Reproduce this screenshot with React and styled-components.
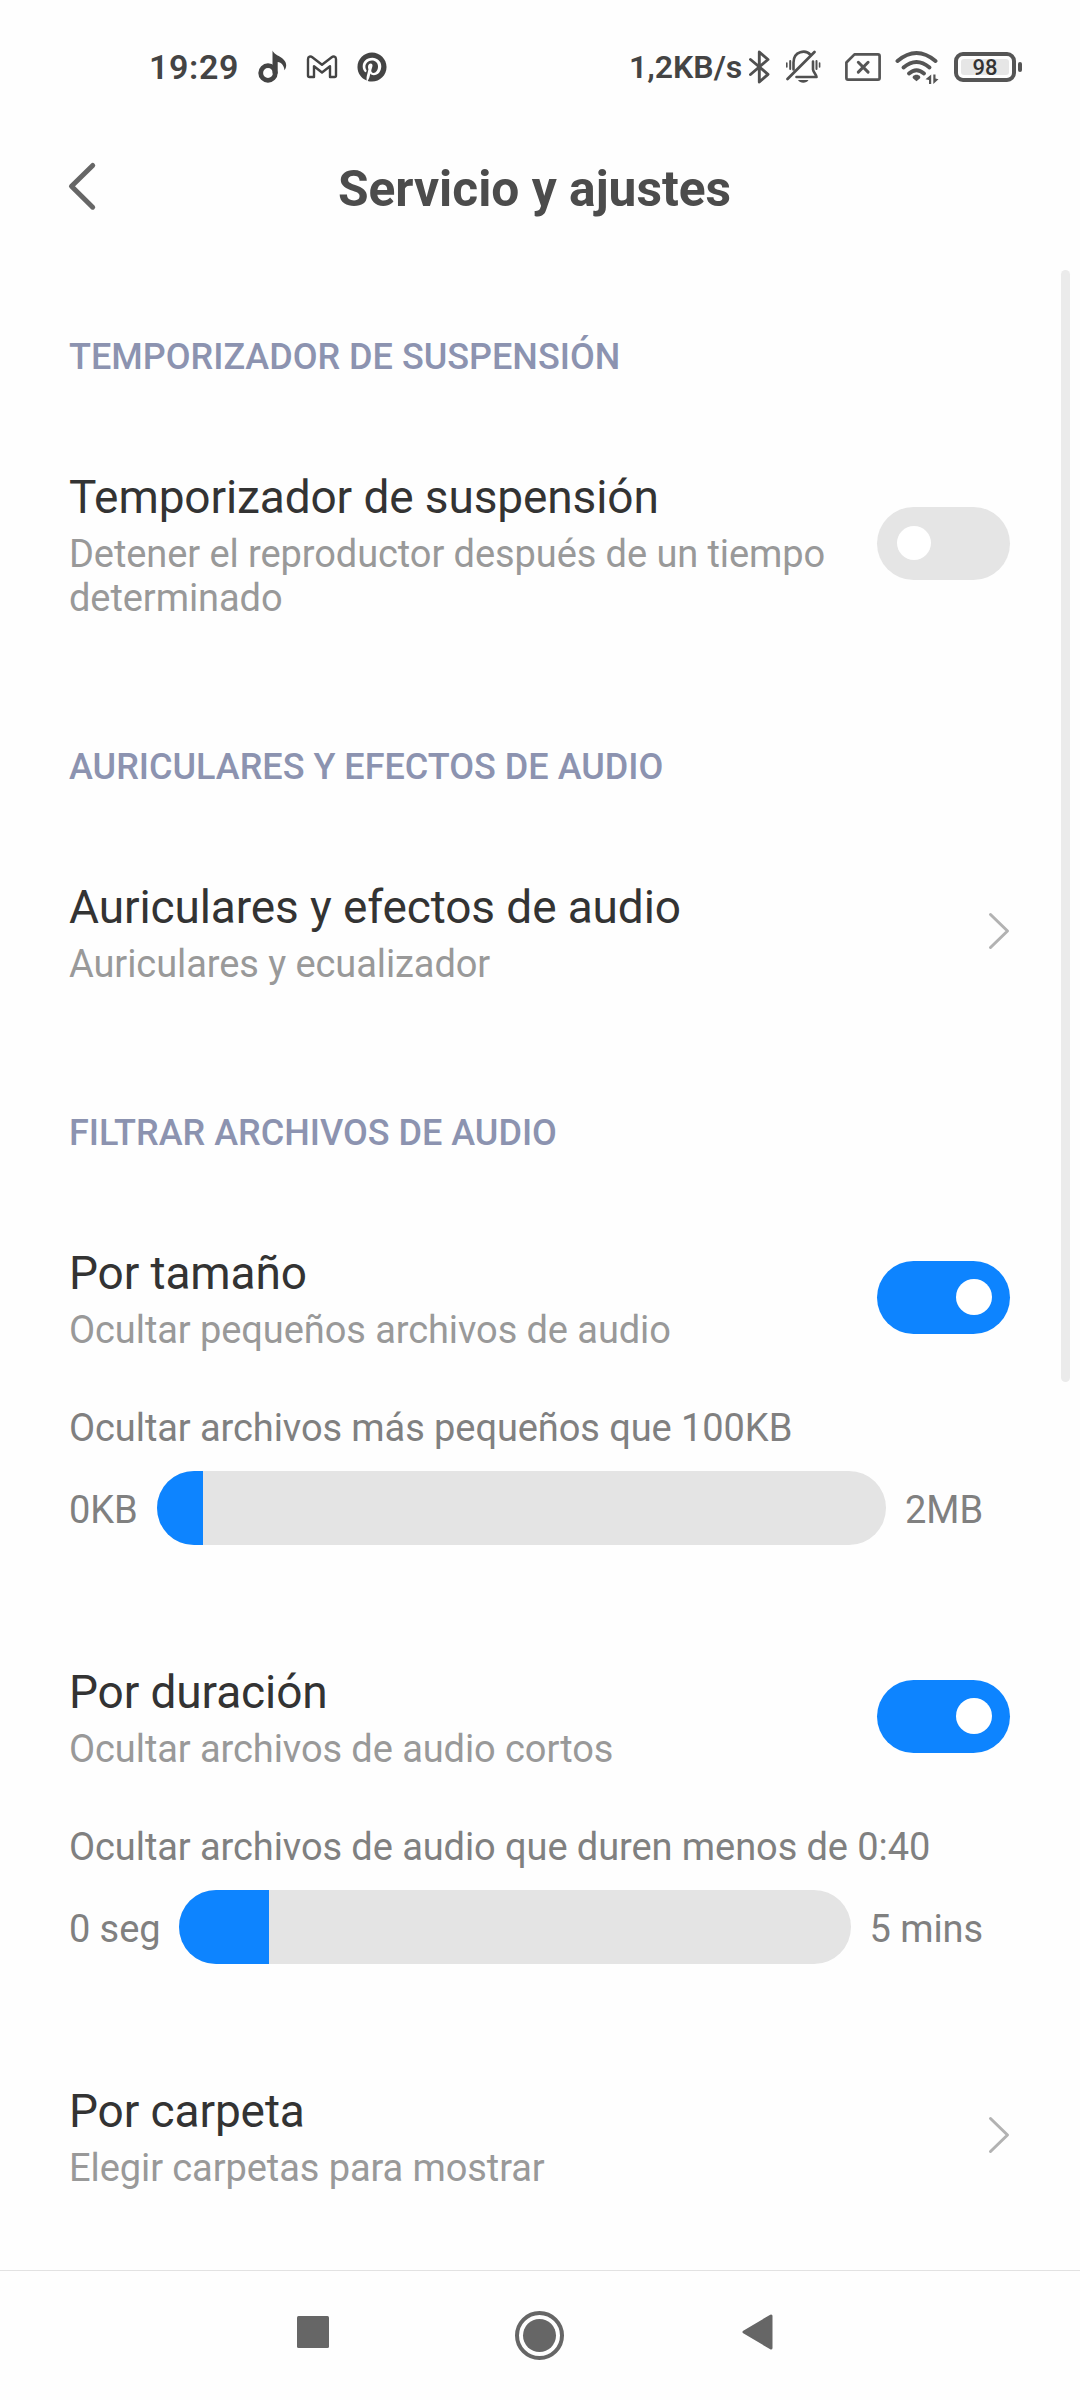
import React from "react";
import styled, { createGlobalStyle } from "styled-components";
import { FaPinterest } from "react-icons/fa";

const GlobalStyle = createGlobalStyle`
  * { box-sizing: border-box; }
  body { margin: 0; background: #fefefe; }
`;

const Screen = styled.div`
  width: 1080px;
  height: 2400px;
  display: flex;
  flex-direction: column;
  position: relative;
  overflow: hidden;
  background: #fefefe;
  font-family: Roboto, "Noto Sans", sans-serif;
`;

const StatusBar = styled.header`
  height: 134px;
  flex: none;
  display: flex;
  align-items: center;
  justify-content: space-between;
  padding: 0 58px 0 149px;
  color: #444;
  svg { display: block; flex: none; }
`;

const StatusGroup = styled.div`
  display: flex;
  align-items: center;
`;

const Clock = styled.span`
  width: 108px;
  font-size: 34px;
  font-weight: 600;
  line-height: 40px;
  letter-spacing: 0.6px;
  white-space: nowrap;
`;

const NetSpeed = styled.span`
  width: 118px;
  font-size: 32px;
  font-weight: 600;
  line-height: 40px;
  white-space: nowrap;
`;

const IconSlot = styled.span`
  display: flex;
  margin-left: ${(p) => p.$gap}px;
`;

const Battery = styled.span`
  width: 62px;
  height: 30px;
  margin-left: 15px;
  padding: 3px;
  border: 4px solid #555;
  border-radius: 9px;
`;

const BatteryLevel = styled.span`
  display: flex;
  align-items: center;
  justify-content: center;
  height: 16px;
  padding-top: 1px;
  border-radius: 3px;
  background: #e6e6e6;
  color: #333;
  font-size: 22px;
  font-weight: 500;
  line-height: 16px;
`;

const BatteryNub = styled.span`
  width: 4px;
  height: 10px;
  margin-left: 2px;
  border-radius: 2px;
  background: #555;
`;

const TitleBar = styled.div`
  height: 106px;
  flex: none;
  display: grid;
  grid-template-columns: 100px 1fr 100px;
  padding: 27px 11px 0 0;
`;

const BackButton = styled.button`
  display: flex;
  align-items: flex-start;
  height: 52px;
  padding: 0 0 0 67px;
  border: 0;
  background: none;
`;

const PageTitle = styled.h1`
  margin: 0;
  text-align: center;
  color: #4c4c4c;
  font-size: 49.7px;
  font-weight: 700;
  line-height: 56px;
`;

const Content = styled.main`
  flex: 1;
  min-height: 0;
  padding: 96px 70px 0 69px;
`;

const Section = styled.section`
  margin-bottom: 126px;
`;

const SectionTitle = styled.h2`
  margin: 0 0 92px;
  color: #8c93b0;
  font-size: 36px;
  font-weight: 500;
  line-height: 42px;
`;

const Item = styled.div`
  display: flex;
  align-items: center;
  justify-content: space-between;
  gap: 40px;
`;

const ItemText = styled.div`
  flex: 1;
`;

const ItemTitle = styled.div`
  margin-bottom: 8px;
  color: #333;
  font-size: 46px;
  line-height: 54px;
  letter-spacing: -0.11px;
`;

const ItemNote = styled.div`
  color: #999;
  font-size: 38px;
  line-height: 44px;
  letter-spacing: -0.08px;
`;

const Switch = styled.div`
  width: 133px;
  height: 73px;
  flex: none;
  display: flex;
  align-items: center;
  justify-content: ${(p) => (p.$on ? "flex-end" : "flex-start")};
  margin: 0 0 4px;
  padding: 0 18px 0 20px;
  border-radius: 37px;
  background: ${(p) => (p.$on ? "#0d84ff" : "#e5e5e5")};
`;

const Knob = styled.span`
  width: ${(p) => (p.$on ? 36 : 34)}px;
  height: ${(p) => (p.$on ? 36 : 34)}px;
  border-radius: 50%;
  background: #fff;
`;

const ArrowSlot = styled.span`
  display: flex;
  margin-bottom: 4px;
`;

const Range = styled.div`
  margin: 54px 0 120px;
  color: #808080;
  font-size: 38px;
  line-height: 44px;
  letter-spacing: -0.08px;
`;

const RangeRow = styled.div`
  display: flex;
  align-items: center;
  gap: 19px;
  margin: 21px 27px 0 0;
`;

const RangeLabel = styled.span`
  padding-top: 3px;
  white-space: nowrap;
`;

const Track = styled.div`
  flex: 1;
  height: 74px;
  overflow: hidden;
  border-radius: 37px;
  background: #e4e4e4;
`;

const Fill = styled.div`
  height: 100%;
  background: #0d84ff;
`;

const Scrollbar = styled.div`
  position: absolute;
  top: 270px;
  right: 10px;
  width: 9px;
  height: 1112px;
  border-radius: 5px;
  background: #ebebeb;
`;

const NavBar = styled.nav`
  height: 130px;
  flex: none;
  display: flex;
  align-items: flex-start;
  border-top: 1px solid #e2e2e2;
  padding: 40px 0 0 297px;
  svg { display: block; }
`;

const NavButton = styled.span`
  display: flex;
  margin: ${(p) => p.$top}px 0 0 ${(p) => p.$gap || 0}px;
`;

const NoteIcon = () => (
  <svg width="30" height="34" viewBox="0 0 30 34">
    <circle cx="10" cy="23" r="7.3" fill="none" stroke="#444" strokeWidth="4.8" />
    <path d="M14.500 0.500C16.500 6 28 7 28.200 15c0 2-.5 3.500-1.700 5.200C26 15.500 23.500 12.500 19.700 12v11.500h-5.200z" fill="#444" />
  </svg>
);

const MailIcon = () => (
  <svg width="32" height="24" viewBox="0 0 32 24" fill="none" stroke="#444" strokeWidth="2.400" strokeLinejoin="round">
    <path d="M2 20.500V4.200C2 1.500 4.600.900 6.300 2.200L16 9.700l9.700-7.500C27.400.900 30 1.500 30 4.200V20.500q0 1.500-1.500 1.500H24V11.300l-8 6.200-8-6.200V22H3.500Q2 22 2 20.500z" />
  </svg>
);

const BluetoothIcon = () => (
  <svg width="23" height="36" viewBox="0 0 23 36" fill="none" stroke="#505050" strokeWidth="2.900" strokeLinejoin="round" strokeLinecap="round">
    <path d="M2.500 10.500L20 25.300L11.300 33V3L20 10.500L2.500 25.500" />
  </svg>
);

const MutedBellIcon = () => (
  <svg width="36" height="36" viewBox="0 0 36 36" fill="none" stroke="#505050" strokeWidth="2.600" strokeLinecap="round">
    <path d="M8.500 20.500V13.500C8.500 1.500 21 .500 25.500 5.800M28 12.500V20.500c.500 3 3 4.500 3.500 7.500H11.500" strokeLinejoin="round" />
    <path d="M2.500 30L29.500 3" strokeWidth="2.800" />
    <path d="M5.200 12v8M31.500 12v8" strokeWidth="2" />
    <path d="M1.800 14v4M34.600 14v4" strokeWidth="1.600" />
    <path d="M13 31h10.500c-2 3.500-8.500 3.500-10.500 0z" fill="#505050" stroke="none" />
  </svg>
);

const NoSimIcon = () => (
  <svg width="36" height="28" viewBox="0 0 36 28" fill="none" stroke="#555" strokeLinecap="round" strokeLinejoin="round">
    <path d="M9.500 1.400H33q1.600 0 1.600 1.600v22q0 1.600-1.600 1.600H3q-1.600 0-1.600-1.600V9.500z" strokeWidth="2.700" />
    <path d="M13.300 9.300l9.800 9.800M23.100 9.300l-9.800 9.800" strokeWidth="3" />
  </svg>
);

const WifiIcon = () => (
  <svg width="44" height="36" viewBox="0 0 44 36" fill="none" stroke="#555" strokeWidth="3.900" strokeLinecap="round">
    <path d="M2.500 12Q21.500-4 40.500 12" />
    <path d="M8.500 18.500Q21.500 7.500 34.500 18.500" />
    <path d="M14 24.500Q21.500 18 29 24.500" />
    <path d="M21.500 25.800c3 0 4.800 2.300 3.300 3.800l-3.300 2.600-3.300-2.600c-1.500-1.500.300-3.800 3.300-3.800z" fill="#555" stroke="none" />
    <path d="M36.200 25.500v9.500h-2.200v-4l-3.500-.800zM38.300 25.500h2.200v4l3 .8-5.200 4.700z" fill="#555" stroke="none" />
  </svg>
);

const BackIcon = () => (
  <svg width="30" height="52" viewBox="0 0 30 52" fill="none" stroke="#666" strokeWidth="5" strokeLinecap="round" strokeLinejoin="round">
    <path d="M25.700 4.500L4.500 25.300L25.700 46.200" />
  </svg>
);

const ArrowIcon = () => (
  <svg width="22" height="38" viewBox="0 0 22 38" fill="none" stroke="#b2b2b2" strokeWidth="3" strokeLinecap="round" strokeLinejoin="round">
    <path d="M2.500 2.500L19.500 19L2.500 35.500" />
  </svg>
);

const Toggle = ({ on }) => (
  <Switch $on={on} role="switch" aria-checked={on}>
    <Knob $on={on} />
  </Switch>
);

const Arrow = () => (
  <ArrowSlot>
    <ArrowIcon />
  </ArrowSlot>
);

const Setting = ({ title, note, children }) => (
  <Item>
    <ItemText>
      <ItemTitle>{title}</ItemTitle>
      <ItemNote>{note}</ItemNote>
    </ItemText>
    {children}
  </Item>
);

const RangeSetting = ({ label, min, max, percent }) => (
  <Range>
    <div>{label}</div>
    <RangeRow>
      <RangeLabel>{min}</RangeLabel>
      <Track>
        <Fill style={{ width: `${percent}%` }} />
      </Track>
      <RangeLabel>{max}</RangeLabel>
    </RangeRow>
  </Range>
);

export default function App() {
  return (
    <Screen>
      <GlobalStyle />
      <StatusBar>
        <StatusGroup>
          <Clock>19:29</Clock>
          <IconSlot $gap={1}><NoteIcon /></IconSlot>
          <IconSlot $gap={18}><MailIcon /></IconSlot>
          <IconSlot $gap={19}><FaPinterest size={30} /></IconSlot>
        </StatusGroup>
        <StatusGroup>
          <NetSpeed>1,2KB/s</NetSpeed>
          <IconSlot $gap={1}><BluetoothIcon /></IconSlot>
          <IconSlot $gap={14}><MutedBellIcon /></IconSlot>
          <IconSlot $gap={24}><NoSimIcon /></IconSlot>
          <IconSlot $gap={14}><WifiIcon /></IconSlot>
          <Battery><BatteryLevel>98</BatteryLevel></Battery>
          <BatteryNub />
        </StatusGroup>
      </StatusBar>

      <TitleBar>
        <BackButton aria-label="Atrás"><BackIcon /></BackButton>
        <PageTitle>Servicio y ajustes</PageTitle>
      </TitleBar>

      <Content>
        <Section>
          <SectionTitle>TEMPORIZADOR DE SUSPENSIÓN</SectionTitle>
          <Setting title="Temporizador de suspensión" note="Detener el reproductor después de un tiempo determinado">
            <Toggle on={false} />
          </Setting>
        </Section>

        <Section>
          <SectionTitle>AURICULARES Y EFECTOS DE AUDIO</SectionTitle>
          <Setting title="Auriculares y efectos de audio" note="Auriculares y ecualizador">
            <Arrow />
          </Setting>
        </Section>

        <Section>
          <SectionTitle>FILTRAR ARCHIVOS DE AUDIO</SectionTitle>
          <Setting title="Por tamaño" note="Ocultar pequeños archivos de audio">
            <Toggle on />
          </Setting>
          <RangeSetting label="Ocultar archivos más pequeños que 100KB" min="0KB" max="2MB" percent={6.3} />
          <Setting title="Por duración" note="Ocultar archivos de audio cortos">
            <Toggle on />
          </Setting>
          <RangeSetting label="Ocultar archivos de audio que duren menos de 0:40" min="0 seg" max="5 mins" percent={13.4} />
          <Setting title="Por carpeta" note="Elegir carpetas para mostrar">
            <Arrow />
          </Setting>
        </Section>
      </Content>

      <Scrollbar />

      <NavBar>
        <NavButton $top={5}>
          <svg width="32" height="32" viewBox="0 0 32 32"><rect width="32" height="32" rx="1.500" fill="#666" /></svg>
        </NavButton>
        <NavButton $top={0} $gap={186}>
          <svg width="49" height="49" viewBox="0 0 49 49">
            <circle cx="24.500" cy="24.500" r="22.500" fill="none" stroke="#666" strokeWidth="4" />
            <circle cx="24.500" cy="24.500" r="16.500" fill="#666" />
          </svg>
        </NavButton>
        <NavButton $top={2} $gap={178}>
          <svg width="31" height="38" viewBox="0 0 31 38">
            <path d="M2 19L29 3V35z" fill="#666" stroke="#666" strokeWidth="3" strokeLinejoin="round" />
          </svg>
        </NavButton>
      </NavBar>
    </Screen>
  );
}
